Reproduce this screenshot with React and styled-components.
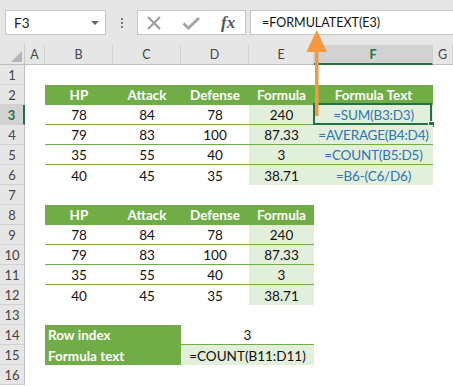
import React from 'react';
import styled, { createGlobalStyle } from 'styled-components';

const GREEN = '#70ad47';
const LIGHT = '#e2efda';
const DARK = '#217346';

const GlobalStyle = createGlobalStyle`
  html, body {
    margin: 0;
    padding: 0;
    background: #ffffff;
  }
  body {
    font-family: Lato, 'Liberation Sans', sans-serif;
  }
`;

const Page = styled.div`
  position: relative;
  width: 453px;
  height: 386px;
  overflow: hidden;
  background: #ffffff;
`;

const Toolbar = styled.div`
  height: 45px;
  background: #e6e6e6;
  display: flex;
  align-items: flex-start;
  padding: 10px 0 0 5px;
  box-sizing: border-box;
`;

const NameBox = styled.div`
  width: 101px;
  height: 25px;
  box-sizing: border-box;
  border: 1px solid #c6c6c6;
  background: #fff;
  display: flex;
  align-items: center;
  justify-content: space-between;
  padding: 0 6px 0 8px;
  font-size: 13.5px;
  color: #222;
`;

const Caret = styled.span`
  width: 0;
  height: 0;
  border-left: 4px solid transparent;
  border-right: 4px solid transparent;
  border-top: 4px solid #666;
`;

const Dots = styled.div`
  width: 31px;
  height: 25px;
  display: flex;
  flex-direction: column;
  align-items: center;
  justify-content: center;
  gap: 2px;

  span {
    width: 2px;
    height: 2px;
    background: #777;
  }
`;

const FxBox = styled.div`
  width: 109px;
  height: 25px;
  box-sizing: border-box;
  border: 1px solid #c6c6c6;
  background: #fff;
  display: flex;
  align-items: center;
  padding-left: 8px;
  gap: 20px;
`;

const Fx = styled.span`
  font-family: 'Liberation Serif', serif;
  font-style: italic;
  font-weight: bold;
  font-size: 17px;
  color: #555;
`;

const FormulaInput = styled.div`
  flex: 1;
  height: 25px;
  margin-left: 4px;
  box-sizing: border-box;
  border: 1px solid #c6c6c6;
  border-right: none;
  background: #fff;
  display: flex;
  align-items: center;
  padding-left: 11px;
  font-size: 12.5px;
  color: #111;
`;

const Sheet = styled.div`
  display: grid;
  grid-template-columns: 25px 20px 68px 68px 68px 65px 119px 1fr;
  grid-template-rows: repeat(17, 20px);
`;

const Corner = styled.div`
  grid-column: 1;
  grid-row: 1;
  background: #e6e6e6;
  border-right: 1px solid #c9c9c9;
  border-bottom: 1px solid #bdbdbd;
  position: relative;

  &::after {
    content: '';
    position: absolute;
    right: 2px;
    bottom: 2px;
    border-left: 11px solid transparent;
    border-bottom: 11px solid #b5b5b5;
  }
`;

const ColHead = styled.div`
  grid-row: 1;
  grid-column: ${(p) => p.col};
  background: ${(p) => (p.active ? '#d2d2d2' : '#e6e6e6')};
  color: ${(p) => (p.active ? DARK : '#444')};
  font-weight: ${(p) => (p.active ? 'bold' : 'normal')};
  border-right: 1px solid #d0d0d0;
  border-bottom: ${(p) => (p.active ? `2px solid ${DARK}` : '1px solid #bdbdbd')};
  font-size: 12.5px;
  display: flex;
  align-items: center;
  justify-content: center;
  box-sizing: border-box;
`;

const RowHead = styled.div`
  grid-column: 1;
  grid-row: ${(p) => p.row + 1};
  background: ${(p) => (p.active ? '#d2d2d2' : '#e6e6e6')};
  color: ${(p) => (p.active ? DARK : '#444')};
  font-weight: ${(p) => (p.active ? 'bold' : 'normal')};
  border-bottom: 1px solid #d0d0d0;
  border-right: ${(p) => (p.active ? `2px solid ${DARK}` : '1px solid #bdbdbd')};
  font-size: 13px;
  padding-top: 1px;
  display: flex;
  align-items: center;
  justify-content: center;
  box-sizing: border-box;
`;

const Table = styled.div`
  grid-column: ${(p) => p.cols};
  grid-row: ${(p) => p.rows};
  display: grid;
  grid-template-columns: ${(p) => p.template};
  grid-auto-rows: 20px;
  outline: 1px solid ${GREEN};
  outline-offset: -1px;
`;

const Cell = styled.div`
  position: relative;
  display: flex;
  align-items: center;
  justify-content: ${(p) => (p.left ? 'flex-start' : 'center')};
  padding-left: ${(p) => (p.left ? '3px' : '0')};
  padding-top: 1px;
  grid-column: ${(p) => p.span || 'auto'};
  box-sizing: border-box;
  font-size: 13.5px;
  letter-spacing: ${(p) => (p.blue ? '-0.2px' : 'normal')};
  white-space: nowrap;
  background: ${(p) =>
    p.kind === 'head' || p.kind === 'label' ? GREEN : p.kind === 'calc' ? LIGHT : '#fff'};
  color: ${(p) =>
    p.kind === 'head' || p.kind === 'label' ? '#fff' : p.blue ? '#2e75b6' : '#111'};
  font-weight: ${(p) => (p.kind === 'head' || p.kind === 'label' ? 'bold' : 'normal')};
  border-bottom: ${(p) => (p.last ? 'none' : `1px solid ${GREEN}`)};
`;

const Selection = styled.div`
  position: absolute;
  left: -1px;
  top: -2px;
  right: 1px;
  bottom: -1px;
  border: 2px solid ${DARK};
  pointer-events: none;

  &::after {
    content: '';
    position: absolute;
    right: -5px;
    bottom: -5px;
    width: 5px;
    height: 5px;
    background: ${DARK};
    border: 1px solid #fff;
  }
`;

const Arrow = styled.svg`
  position: absolute;
  left: 306px;
  top: 30px;
`;

const columns = ['A', 'B', 'C', 'D', 'E', 'F', 'G'];

const stats = [
  ['78', '84', '78', '240', '=SUM(B3:D3)'],
  ['79', '83', '100', '87.33', '=AVERAGE(B4:D4)'],
  ['35', '55', '40', '3', '=COUNT(B5:D5)'],
  ['40', '45', '35', '38.71', '=B6-(C6/D6)'],
];

function DataTable({ withText, cols, rows, template }) {
  const heads = ['HP', 'Attack', 'Defense', 'Formula'];
  if (withText) heads.push('Formula Text');
  return (
    <Table cols={cols} rows={rows} template={template}>
      {heads.map((h) => (
        <Cell key={h} kind="head">
          {h}
        </Cell>
      ))}
      {stats.map((r, i) => {
        const last = i === stats.length - 1;
        return (
          <React.Fragment key={i}>
            <Cell last={last}>{r[0]}</Cell>
            <Cell last={last}>{r[1]}</Cell>
            <Cell last={last}>{r[2]}</Cell>
            <Cell kind="calc" last={last}>
              {r[3]}
            </Cell>
            {withText && (
              <Cell kind="calc" blue last={last}>
                {r[4]}
                {i === 0 && <Selection />}
              </Cell>
            )}
          </React.Fragment>
        );
      })}
    </Table>
  );
}

export default function App() {
  return (
    <Page>
      <GlobalStyle />
      <Toolbar>
        <NameBox>
          <span>F3</span>
          <Caret />
        </NameBox>
        <Dots>
          <span />
          <span />
          <span />
        </Dots>
        <FxBox>
          <svg width="16" height="16" viewBox="0 0 16 16">
            <path d="M2 2 L14 14 M14 2 L2 14" stroke="#9a9a9a" strokeWidth="2" fill="none" />
          </svg>
          <svg width="19" height="16" viewBox="0 0 19 16">
            <path d="M1.5 8.5 L6.5 13 L17 3" stroke="#a6a6a6" strokeWidth="3" fill="none" />
          </svg>
          <Fx>fx</Fx>
        </FxBox>
        <FormulaInput>=FORMULATEXT(E3)</FormulaInput>
      </Toolbar>

      <Sheet>
        <Corner />
        {columns.map((c, i) => (
          <ColHead key={c} col={i + 2} active={c === 'F'}>
            {c}
          </ColHead>
        ))}
        {Array.from({ length: 16 }, (_, i) => (
          <RowHead key={i} row={i + 1} active={i + 1 === 3}>
            {i + 1}
          </RowHead>
        ))}

        <DataTable withText cols="3 / 8" rows="3 / 8" template="68px 68px 68px 65px 119px" />
        <DataTable cols="3 / 7" rows="9 / 14" template="68px 68px 68px 65px" />

        <Table cols="3 / 7" rows="15 / 17" template="68px 68px 68px 65px">
          <Cell kind="label" span="span 2" left>
            Row index
          </Cell>
          <Cell span="span 2">3</Cell>
          <Cell kind="label" span="span 2" left last>
            Formula text
          </Cell>
          <Cell kind="calc" span="span 2" last>
            =COUNT(B11:D11)
          </Cell>
        </Table>
      </Sheet>

      <Arrow width="22" height="86" viewBox="0 0 22 86">
        <rect x="9" y="20" width="3.5" height="66" fill="#f5993f" />
        <polygon points="10.7,0 0.5,22 21,22" fill="#f5993f" />
      </Arrow>
    </Page>
  );
}
